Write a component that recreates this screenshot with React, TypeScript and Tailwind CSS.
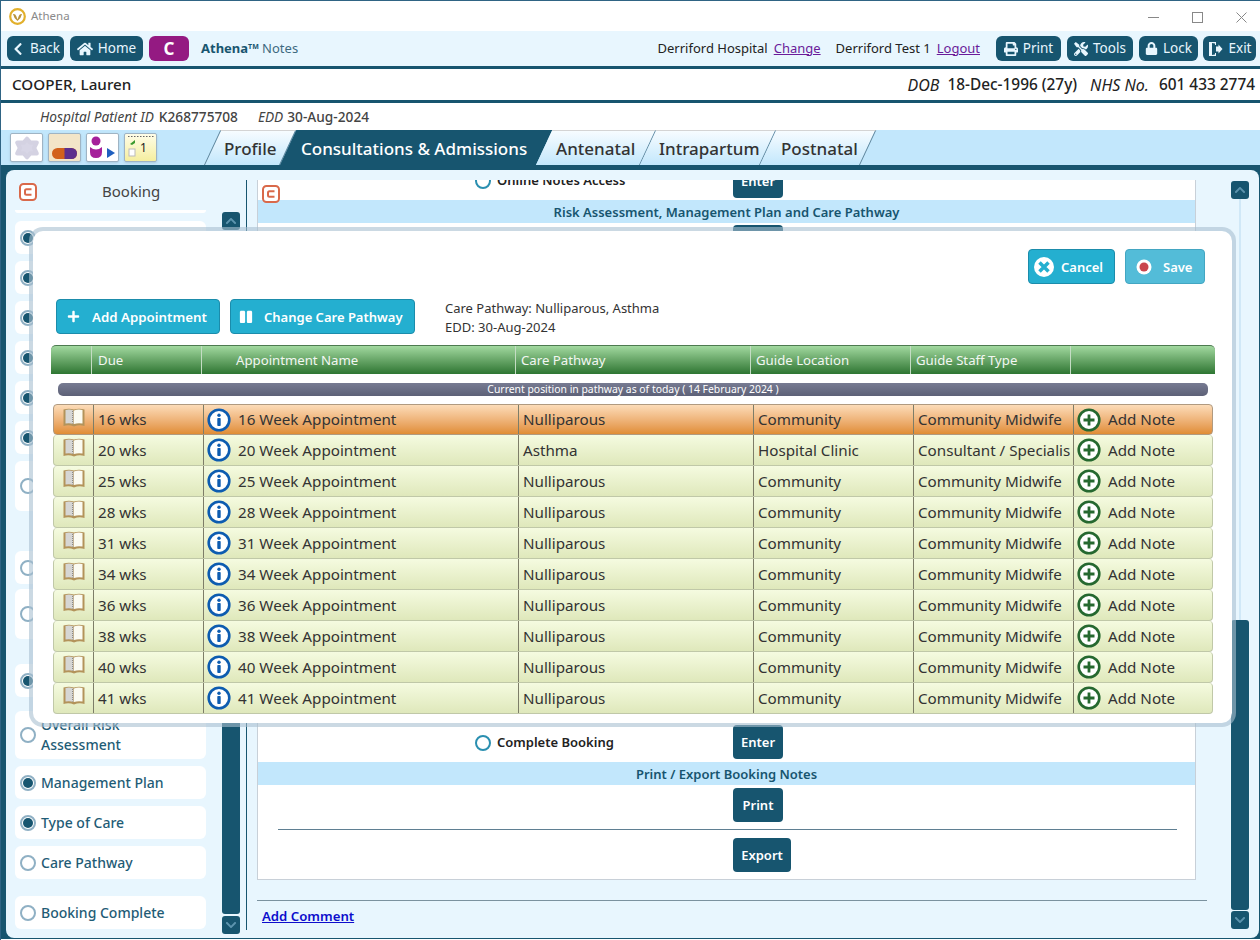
import React from "react";
import { FaChevronLeft, FaChevronUp, FaChevronDown, FaHome, FaPrint, FaTools, FaLock, FaPlus, FaPause } from "react-icons/fa";

const Logo = () => (
  <svg width="17" height="17" viewBox="0 0 17 17">
    <circle cx="8.500" cy="8.500" r="7.300" fill="#fff" stroke="#e2b02c" strokeWidth="2.200" />
    <path d="M4 6Q6.200 5.400 7.200 8L8.500 11.500L9.800 8Q10.800 5.400 13 6Q12.300 10 8.500 13Q4.700 10 4 6Z" fill="#b8923a" />
  </svg>
);

const ExitIcon = () => (
  <svg width="16" height="16" viewBox="0 0 16 16" fill="#e8f6fe">
    <path d="M2 1h7v3H8V2.500L5 2v12l3-.5V12h1v3H2z" />
    <path d="M9 5.500h2.500V3.500L15.500 8l-4 4.500v-2H9z" />
  </svg>
);

const CIcon = () => (
  <svg width="18" height="18" viewBox="0 0 18 18">
    <rect x="1" y="1" width="16" height="16" rx="3.500" fill="#fff" stroke="#d9694a" strokeWidth="2" />
    <path d="M12.500 6.300H7.500Q6 6.300 6 7.800v2.400q0 1.500 1.500 1.500H12.500" fill="none" stroke="#d9694a" strokeWidth="2" />
  </svg>
);

const BookIcon = () => (
  <svg width="24" height="22" viewBox="0 0 24 22">
    <path d="M1.500 2.500Q7 0.800 12 2.500Q17 0.800 22.500 2.500V19Q17 17.500 12 19.500Q7 17.500 1.500 19Z" fill="#b3935a" />
    <path d="M3.500 3Q8 2 11.500 3.500V17Q8 15.600 3.500 16.500Z" fill="#d6d6d4" />
    <path d="M12 3.500Q16 2 20.500 3V16.500Q16 15.600 12 17Z" fill="#fbfbf2" />
    <path d="M10.500 4v12.500" stroke="#8a8a8a" strokeWidth="1" strokeDasharray="1 1" />
  </svg>
);

const InfoIcon = () => (
  <svg width="24" height="24" viewBox="0 0 24 24" className="-ml-[1px] shrink-0">
    <circle cx="12" cy="12" r="10.300" fill="#fff" stroke="#0d5cb0" strokeWidth="2.600" />
    <circle cx="12" cy="7.300" r="1.700" fill="#0d5cb0" />
    <rect x="10.300" y="10" width="3.400" height="8" rx="0.800" fill="#0d5cb0" />
  </svg>
);

const PlusIcon = () => (
  <svg width="24" height="24" viewBox="0 0 24 24" className="-ml-[1px] shrink-0">
    <circle cx="12" cy="12" r="10.300" fill="#fff" stroke="#25682f" strokeWidth="2.600" />
    <path d="M12 6.500v11M6.500 12h11" stroke="#25682f" strokeWidth="2.800" />
  </svg>
);

const Radio = ({ on }: { on: boolean }) => (
  <span className="flex h-[16px] w-[16px] shrink-0 items-center justify-center rounded-full border-2 border-[#8fb0c4] bg-white">
    {on && <span className="h-[10px] w-[10px] rounded-full bg-[#17556f]" />}
  </span>
);

const TopBtn = ({ icon, label, cls }: { icon: React.ReactNode; label: string; cls: string }) => (
  <div className={`flex h-[25px] items-center justify-center gap-[5px] rounded-[6px] bg-[#17556f] text-[13.5px] text-[#e8f6fe] ${cls}`}>
    {icon}
    <span>{label}</span>
  </div>
);

const DarkBtn = ({ label, cls }: { label: string; cls: string }) => (
  <div className={`flex h-[34px] items-center justify-center rounded-[4px] bg-[#17556f] pt-[2px] text-[13px] font-semibold text-white ${cls}`}>{label}</div>
);

const CyanBtn = ({ children, cls }: { children: React.ReactNode; cls: string }) => (
  <div className={`flex h-[35px] items-center rounded-[4px] border border-[#1b8cab] text-[13px] font-semibold text-white ${cls}`}>{children}</div>
);

const tabs = [
  { label: "Profile", w: "w-[76px]", active: false, pl: "pl-[20px]", first: true },
  { label: "Consultations & Admissions", w: "w-[256px]", active: true, pl: "pl-[21px]", first: false },
  { label: "Antenatal", w: "w-[104px]", active: false, pl: "pl-[20px]", first: false },
  { label: "Intrapartum", w: "w-[120px]", active: false, pl: "pl-[19px]", first: false },
  { label: "Postnatal", w: "w-[100px]", active: false, pl: "pl-[21px]", first: false },
];

const side: { label: string; on: boolean; cls: string }[] = [
  { label: "", on: true, cls: "h-[33px] mt-[8px]" },
  { label: "", on: true, cls: "h-[33px] mt-[7px]" },
  { label: "", on: true, cls: "h-[33px] mt-[7px]" },
  { label: "", on: true, cls: "h-[33px] mt-[7px]" },
  { label: "", on: true, cls: "h-[33px] mt-[7px]" },
  { label: "", on: true, cls: "h-[33px] mt-[7px]" },
  { label: "", on: false, cls: "h-[50px] mt-[7px]" },
  { label: "", on: false, cls: "h-[33px] mt-[40px]" },
  { label: "", on: false, cls: "h-[50px] mt-[5px]" },
  { label: "", on: true, cls: "h-[33px] mt-[25px]" },
  { label: "Overall Risk Assessment", on: false, cls: "h-[48px] mt-[14px]" },
  { label: "Management Plan", on: true, cls: "h-[33px] mt-[7px]" },
  { label: "Type of Care", on: true, cls: "h-[33px] mt-[7px]" },
  { label: "Care Pathway", on: false, cls: "h-[33px] mt-[7px]" },
  { label: "Booking Complete", on: false, cls: "h-[33px] mt-[17px]" },
];

const rows = [
  ["16 wks", "16 Week Appointment", "Nulliparous", "Community", "Community Midwife"],
  ["20 wks", "20 Week Appointment", "Asthma", "Hospital Clinic", "Consultant / Specialist"],
  ["25 wks", "25 Week Appointment", "Nulliparous", "Community", "Community Midwife"],
  ["28 wks", "28 Week Appointment", "Nulliparous", "Community", "Community Midwife"],
  ["31 wks", "31 Week Appointment", "Nulliparous", "Community", "Community Midwife"],
  ["34 wks", "34 Week Appointment", "Nulliparous", "Community", "Community Midwife"],
  ["36 wks", "36 Week Appointment", "Nulliparous", "Community", "Community Midwife"],
  ["38 wks", "38 Week Appointment", "Nulliparous", "Community", "Community Midwife"],
  ["40 wks", "40 Week Appointment", "Nulliparous", "Community", "Community Midwife"],
  ["41 wks", "41 Week Appointment", "Nulliparous", "Community", "Community Midwife"],
];

const Cell = ({ children, cls = "" }: { children: React.ReactNode; cls?: string }) => (
  <div className={`flex h-full min-w-0 items-center whitespace-nowrap border-l border-[#7d7d68] pl-[4px] pr-[3px] ${cls}`}>{children}</div>
);

export default function App() {
  return (
    <div className="relative h-[940px] w-[1260px] overflow-hidden border-l border-t border-[#2f6484] bg-white font-['Noto_Sans',sans-serif] text-[#333]">
      {/* title bar */}
      <div className="flex h-[30px] items-center justify-between bg-white">
        <div className="flex items-center gap-[5px] pl-[8px] text-[11.5px] text-[#8a8a8a]">
          <Logo />
          <span>Athena</span>
        </div>
        <div className="flex items-center gap-[33px] pr-[13px] pt-[3px] text-[#777]">
          <svg width="11" height="11" viewBox="0 0 11 11"><path d="M0 5.500h11" stroke="#888" /></svg>
          <svg width="11" height="11" viewBox="0 0 11 11"><rect x="0.500" y="0.500" width="10" height="10" fill="none" stroke="#888" /></svg>
          <svg width="11" height="11" viewBox="0 0 11 11"><path d="M0.500 0.500l10 10M10.500 0.500l-10 10" stroke="#888" /></svg>
        </div>
      </div>
      {/* toolbar */}
      <div className="box-content flex h-[35px] items-center border-b-[3px] border-[#17556f] bg-[#e8f6fe] pl-[6px] pr-[4px]">
        <TopBtn cls="w-[57px]" icon={<FaChevronLeft size={14} />} label="Back" />
        <TopBtn cls="ml-[6px] w-[73px]" icon={<FaHome size={16} />} label="Home" />
        <div className="ml-[6px] flex h-[25px] w-[40px] items-center justify-center rounded-[6px] bg-[#941a82] text-[17px] font-bold text-white">C</div>
        <div className="ml-[12px] text-[13px] text-[#3d6a80]">
          <span className="font-bold text-[#17556f]">Athena</span>
          <sup className="text-[7px] font-bold text-[#17556f]">TM</sup> Notes
        </div>
        <div className="ml-auto flex items-center text-[13px] text-[#222]">
          <span>Derriford Hospital</span>
          <span className="ml-[6px] text-[#6a1b9a] underline">Change</span>
          <span className="ml-[15px]">Derriford Test 1</span>
          <span className="ml-[6px] text-[#6a1b9a] underline">Logout</span>
          <TopBtn cls="ml-[16px] w-[65px]" icon={<FaPrint size={14} />} label="Print" />
          <TopBtn cls="ml-[6px] w-[66px]" icon={<FaTools size={14} />} label="Tools" />
          <TopBtn cls="ml-[6px] w-[59px]" icon={<FaLock size={13} />} label="Lock" />
          <TopBtn cls="ml-[5px] w-[53px]" icon={<ExitIcon />} label="Exit" />
        </div>
      </div>
      {/* patient */}
      <div className="box-content flex h-[31px] items-center justify-between border-b-[3px] border-[#17556f] pl-[11px] pr-[5px] text-[15.4px] text-[#222]">
        <span className="text-[15.2px] font-medium">COOPER, Lauren</span>
        <span className="flex items-center">
          <i className="text-[16px] font-normal">DOB</i>
          <span className="ml-[8px] font-medium">18-Dec-1996 (27y)</span>
          <i className="ml-[13px] text-[16px]">NHS No.</i>
          <span className="ml-[10px] font-medium">601 433 2774</span>
        </span>
      </div>
      <div className="flex h-[27px] items-center pl-[39px] pt-[2px] text-[13.7px] text-[#444]">
        <i>Hospital Patient ID</i>
        <span className="ml-[5px] font-medium">K268775708</span>
        <i className="ml-[20px]">EDD</i>
        <span className="ml-[4px] font-medium">30-Aug-2024</span>
      </div>
      {/* tabs */}
      <div className="box-content flex h-[35px] border-b-[5px] border-[#17556f] bg-[#c2e7fc] pl-[9px]">
        <div className="flex items-center gap-[5px]">
          <div className="flex h-[29px] w-[33px] items-center justify-center rounded-[2px] border border-[#9fb4c4] bg-white shadow-sm">
            <svg width="28" height="26" viewBox="0 0 26 24"><path d="M13 3.500l3 3.500 6 0-2.500 5 2.500 5-6 0-3 3.500-3-3.500-6 0 2.500-5-2.500-5 6 0z" fill="#d8d6e6" stroke="#d4d2e2" strokeLinejoin="round" strokeWidth="4" /></svg>
          </div>
          <div className="flex h-[29px] w-[33px] items-end justify-center rounded-[2px] border border-[#9fb4c4] bg-[#f3e5c8] pb-[2px] shadow-sm">
            <svg width="25" height="11" viewBox="0 0 25 11"><rect width="25" height="11" rx="5.500" fill="#d2611c" /><path d="M12.500 0h7a5.500 5.500 0 0 1 0 11h-7z" fill="#5c2f8e" /></svg>
          </div>
          <div className="flex h-[29px] w-[33px] items-center justify-center rounded-[2px] border border-[#9fb4c4] bg-white shadow-sm">
            <svg width="27" height="23" viewBox="0 0 27 23"><circle cx="7" cy="5" r="4.500" fill="#a5209a" /><path d="M1 11Q7 16 13 11V16Q13 22 7 22Q1 22 1 16Z" fill="#a5209a" /><path d="M18 12l8 5-8 5z" fill="#1f5fbf" /></svg>
          </div>
          <div className="relative flex h-[29px] w-[33px] items-center justify-center rounded-[2px] border border-[#9fb4c4] bg-gradient-to-b from-[#fffde8] to-[#f5ee9e] text-[12px] shadow-sm">
            <svg className="absolute left-[3px] top-[2px]" width="26" height="24" viewBox="0 0 26 24"><path d="M0 0.500h26" stroke="#666" strokeDasharray="1.500 1.500" /><path d="M2 8l5-4v3l-3 2z" fill="#3a9a2e" /><rect x="1" y="13" width="6" height="7" fill="#fff" stroke="#bbb" /></svg>
            <span className="ml-[6px] text-[#222]">1</span>
          </div>
        </div>
        <div className="ml-[47px] flex h-full">
          {tabs.map((t) => (
            <div key={t.label} className={`relative flex h-full items-center pt-[2px] ${t.w} ${t.pl} text-[17px] font-medium ${t.active ? "text-white" : "text-[#333]"}`}>
              <div
                className={`absolute inset-0 origin-bottom -skew-x-[25deg] ${
                  t.active
                    ? "bg-[#17556f]"
                    : `border-r border-t border-r-[#5f859b] border-t-[#d4d4d4] bg-gradient-to-b from-[#f7fcff] to-[#c2e7fc] ${t.first ? "border-l border-l-[#5f859b]" : ""}`
                }`}
              />
              <span className="relative z-10 whitespace-nowrap">{t.label}</span>
            </div>
          ))}
        </div>
      </div>
      {/* main */}
      <div className="h-[769px] bg-[#17556f] pl-[5px] pr-[1px] pb-[1px]">
        <div className="flex h-full rounded-[8px] bg-[#e8f6fe] pt-[10px]">
          {/* sidebar */}
          <div className="ml-[9px] w-[191px] shrink-0">
            <div className="relative h-[30px] pl-[87px] text-[15px] text-[#444]">
              <span className="absolute left-[4px] top-[3px]"><CIcon /></span>
              Booking
            </div>
            <div className="h-[3px] rounded-b-[6px] bg-white" />
            {side.map((s, i) => (
              <div key={i} className={`flex items-center gap-[5px] rounded-[6px] bg-white pl-[5px] text-[14px] font-medium leading-[20px] text-[#1f5c76] ${s.cls}`}>
                <Radio on={s.on} />
                <span className="w-[145px]">{s.label}</span>
              </div>
            ))}
          </div>
          {/* left scroll */}
          <div className="ml-[16px] flex h-[754px] w-[18px] shrink-0 flex-col pt-[32px]">
            <div className="flex h-[18px] items-center justify-center rounded-[3px] bg-[#17556f] text-[#5d94ae]"><FaChevronUp size={12} /></div>
            <div className="mt-[1px] flex-1 rounded-[3px] bg-[#17556f]" />
            <div className="mt-[2px] flex h-[18px] items-center justify-center rounded-[3px] bg-[#17556f] text-[#5d94ae]"><FaChevronDown size={12} /></div>
          </div>
          <div className="ml-[6px] h-[750px] w-px shrink-0 bg-[#17556f]" />
          {/* centre */}
          <div className="ml-[10px] flex w-[950px] shrink-0 flex-col">
            <div className="relative h-[700px] w-[939px] overflow-hidden border-b border-l border-r border-[#c8d0d8] bg-white text-[13px] font-semibold text-[#222]">
              <span className="absolute left-[4px] top-[5px] z-10"><CIcon /></span>
              <div className="-mt-[17px] flex h-[36px] items-center">
                <div className="ml-[217px] flex w-[258px] items-center gap-[6px]">
                  <span className="flex h-[16px] w-[16px] rounded-full border-2 border-[#2a8fb0]" />
                  Online Notes Access
                </div>
                <DarkBtn cls="w-[50px]" label="Enter" />
              </div>
              <div className="mt-[1px] flex h-[23px] items-center justify-center bg-[#c2e7fc] pt-[2px] text-[#17556f]">Risk Assessment, Management Plan and Care Pathway</div>
              <DarkBtn cls="ml-[475px] mt-[2px] w-[50px]" label="Enter" />
              <div className="mt-[465px] flex h-[36px] items-center">
                <div className="ml-[217px] flex w-[258px] items-center gap-[6px] pt-[2px]">
                  <span className="flex h-[16px] w-[16px] rounded-full border-2 border-[#2a8fb0]" />
                  Complete Booking
                </div>
                <DarkBtn cls="w-[50px]" label="Enter" />
              </div>
              <div className="mt-[2px] flex h-[23px] items-center justify-center bg-[#c2e7fc] pt-[2px] text-[#17556f]">Print / Export Booking Notes</div>
              <DarkBtn cls="ml-[475px] mt-[3px] w-[50px]" label="Print" />
              <div className="ml-[20px] mt-[7px] h-px w-[899px] bg-[#5f7f92]" />
              <DarkBtn cls="ml-[475px] mt-[8px] w-[58px]" label="Export" />
            </div>
            <div className="mt-[20px] h-px w-[950px] bg-[#7b929f]" />
            <div className="ml-[5px] mt-[6px] text-[13.2px] font-semibold text-[#0d0dcc] underline">Add Comment</div>
          </div>
          {/* right scroll */}
          <div className="ml-[24px] flex h-[750px] w-[18px] shrink-0 flex-col items-center pt-[1px]">
            <div className="flex h-[18px] w-[18px] shrink-0 items-center justify-center rounded-[3px] bg-[#17556f] text-[#5d94ae]"><FaChevronUp size={12} /></div>
            <div className="h-[421px] w-[2px] bg-[#d0e8f7]" />
            <div className="h-[290px] w-[18px] shrink-0 rounded-[3px] bg-[#17556f]" />
            <div className="mt-[1px] flex h-[18px] w-[18px] shrink-0 items-center justify-center rounded-[3px] bg-[#17556f] text-[#5d94ae]"><FaChevronDown size={12} /></div>
          </div>
        </div>
      </div>

      {/* modal */}
      <div className="absolute left-[28px] top-[226px] h-[500px] w-[1207px] rounded-[14px] border-[4px] border-[#a9c0d0]/60 bg-white bg-clip-padding pt-[18px]">
        <div className="flex justify-end gap-[10px] pr-[27px]">
          <CyanBtn cls="w-[87px] bg-[#24afd0] pl-[5px]">
            <svg width="20" height="20" viewBox="0 0 20 20"><circle cx="10" cy="10" r="10" fill="#fff" /><path d="M5.500 5.500l9 9M14.500 5.500l-9 9" stroke="#24afd0" strokeWidth="3.500" /></svg>
            <span className="ml-[7px] pt-[2px]">Cancel</span>
          </CyanBtn>
          <CyanBtn cls="w-[80px] border-[#43a6c2] bg-[#53bcd8] pl-[10px]">
            <svg width="16" height="16" viewBox="0 0 16 16"><circle cx="8" cy="8" r="7.500" fill="#fff" /><circle cx="8" cy="8" r="4.500" fill="#c9464e" /></svg>
            <span className="ml-[11px] pt-[2px]">Save</span>
          </CyanBtn>
        </div>
        <div className="ml-[23px] mt-[15px] flex items-start">
          <CyanBtn cls="w-[164px] bg-[#24afd0] pl-[10px]">
            <FaPlus size={13} />
            <span className="ml-[12px] pt-[2px] text-[13.3px]">Add Appointment</span>
          </CyanBtn>
          <CyanBtn cls="ml-[10px] w-[185px] bg-[#24afd0] pl-[8px]">
            <FaPause size={14} />
            <span className="ml-[11px] pt-[2px]">Change Care Pathway</span>
          </CyanBtn>
          <div className="ml-[30px] text-[13px] leading-[19px] text-[#333]">
            <div>Care Pathway: Nulliparous, Asthma</div>
            <div>EDD: 30-Aug-2024</div>
          </div>
        </div>
        {/* table head */}
        <div className="ml-[18px] mt-[8px] grid h-[29px] w-[1164px] grid-cols-[40px_110px_314px_235px_160px_160px_145px] items-center rounded-t-[5px] border-t border-[#4d7a50] bg-gradient-to-b from-[#a2d9a0] to-[#2d7632] text-[13.2px] text-[#f2f7f2]">
          <div />
          <div className="flex h-full items-center border-l border-[#c4dcc4] pl-[6px] pt-[2px]">Due</div>
          <div className="flex h-full items-center border-l border-[#c4dcc4] pl-[34px] pt-[2px]">Appointment Name</div>
          <div className="flex h-full items-center border-l border-[#c4dcc4] pl-[5px] pt-[2px]">Care Pathway</div>
          <div className="flex h-full items-center border-l border-[#c4dcc4] pl-[5px] pt-[2px]">Guide Location</div>
          <div className="flex h-full items-center border-l border-[#c4dcc4] pl-[5px] pt-[2px]">Guide Staff Type</div>
          <div className="h-full border-l border-[#c4dcc4]" />
        </div>
        <div className="ml-[25px] mt-[9px] flex h-[13px] w-[1150px] items-center justify-center rounded-[5px] bg-gradient-to-b from-[#777b92] to-[#5d6177] pt-[1px] text-[10.4px] text-white">
          Current position in pathway as of today ( 14 February 2024 )
        </div>
        {/* rows */}
        <div className="ml-[20px] mt-[8px] w-[1160px]">
          {rows.map((r, i) => (
            <div
              key={r[0]}
              className={`grid h-[31px] grid-cols-[39px_110px_315px_235px_160px_160px_139px] items-center rounded-[4px] border-x border-b text-[15.2px] text-[#333] ${
                i === 0
                  ? "border-t border-[#b09a80] bg-gradient-to-b from-[#fcdcb8] to-[#e08d33]"
                  : "border-[#c0c8a8] bg-gradient-to-b from-[#f5fbe0] to-[#dfe8bb]"
              }`}
            >
              <div className="flex justify-center pb-[4px]"><BookIcon /></div>
              <Cell>{r[0]}</Cell>
              <Cell cls="gap-[7px]"><InfoIcon />{r[1]}</Cell>
              <Cell>{r[2]}</Cell>
              <Cell>{r[3]}</Cell>
              <Cell><span className="overflow-hidden">{r[4]}</span></Cell>
              <Cell cls="gap-[7px]"><PlusIcon />Add Note</Cell>
            </div>
          ))}
        </div>
      </div>
    </div>
  );
}
